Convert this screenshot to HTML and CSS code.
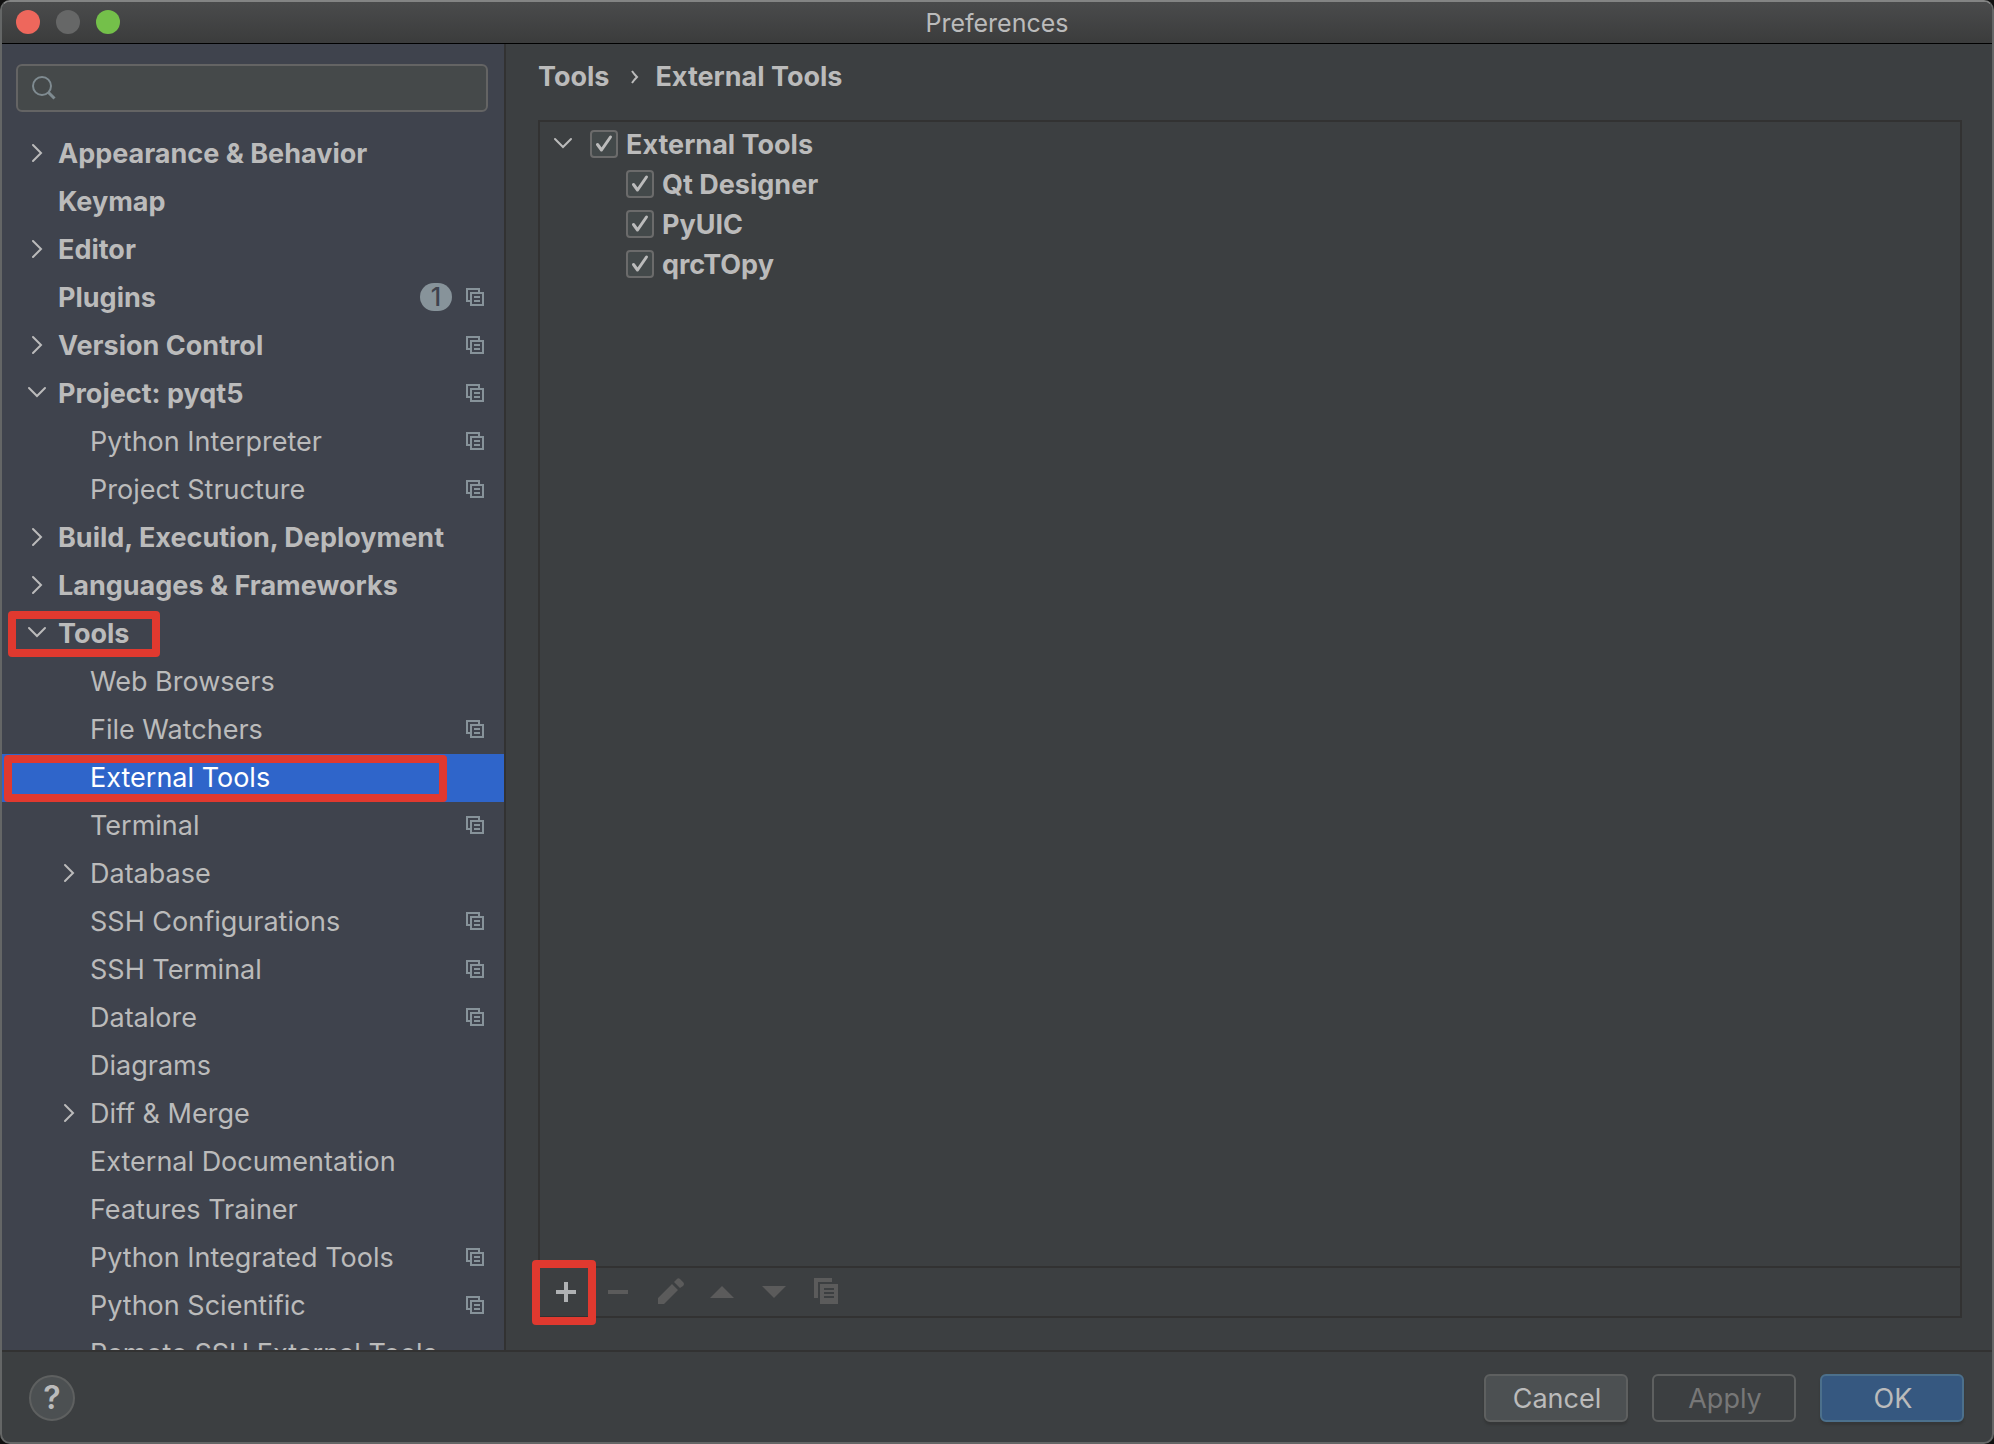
FILE: index.html
```html
<!DOCTYPE html>
<html lang="en">
<head>
<meta charset="utf-8">
<title>Preferences</title>
<link rel="stylesheet" href="styles.css">
</head>
<body>
<svg class="sprite" aria-hidden="true">
  <symbol id="right" viewBox="0 0 20 20"><path d="M6 2l8 8-8 8" fill="none" stroke="currentColor" stroke-width="2" stroke-linecap="round"/></symbol>
  <symbol id="down" viewBox="0 0 20 20"><path d="M2 5l8 8 8-8" fill="none" stroke="currentColor" stroke-width="2" stroke-linecap="round"/></symbol>
  <symbol id="scope" viewBox="0 0 18 18"><path d="M4 13H1V1h12v3M5 5h12v12H5zM8 9h6M8 13h6" fill="none" stroke="currentColor" stroke-width="2"/></symbol>
  <symbol id="check" viewBox="0 0 28 28"><path d="M7.500 14.500l4 5.500 9-13" fill="none" stroke="currentColor" stroke-width="3" stroke-linecap="round" stroke-linejoin="round"/></symbol>
</svg>
<div class="window">
  <header class="titlebar">
    <div class="lights">
      <button class="light close" type="button" aria-label="Close"></button>
      <button class="light minimize" type="button" aria-label="Minimize" disabled></button>
      <button class="light zoom" type="button" aria-label="Zoom"></button>
    </div>
    <h1 class="title">Preferences</h1>
  </header>
  <div class="body">
    <aside class="sidebar">
      <label class="search">
        <svg class="search-icon" viewBox="0 0 24 24" aria-hidden="true"><circle cx="10" cy="10" r="9" fill="none" stroke="currentColor" stroke-width="2"/><path d="M16.500 16.500l6 6" fill="none" stroke="currentColor" stroke-width="3"/></svg>
        <input class="search-input" type="text" aria-label="Search settings">
      </label>
      <nav class="nav" aria-label="Settings">
        <a class="item" href="#"><svg class="chevron"><use href="#right"/></svg><span class="name">Appearance &amp; Behavior</span></a>
        <a class="item" href="#"><span class="chevron"></span><span class="name">Keymap</span></a>
        <a class="item" href="#"><svg class="chevron"><use href="#right"/></svg><span class="name">Editor</span></a>
        <a class="item" href="#"><span class="chevron"></span><span class="name">Plugins</span><span class="badge">1</span><svg class="scope"><use href="#scope"/></svg></a>
        <a class="item" href="#"><svg class="chevron"><use href="#right"/></svg><span class="name">Version Control</span><svg class="scope"><use href="#scope"/></svg></a>
        <a class="item" href="#"><svg class="chevron"><use href="#down"/></svg><span class="name">Project: pyqt5</span><svg class="scope"><use href="#scope"/></svg></a>
        <a class="item child" href="#"><span class="chevron"></span><span class="name">Python Interpreter</span><svg class="scope"><use href="#scope"/></svg></a>
        <a class="item child" href="#"><span class="chevron"></span><span class="name">Project Structure</span><svg class="scope"><use href="#scope"/></svg></a>
        <a class="item" href="#"><svg class="chevron"><use href="#right"/></svg><span class="name">Build, Execution, Deployment</span></a>
        <a class="item" href="#"><svg class="chevron"><use href="#right"/></svg><span class="name">Languages &amp; Frameworks</span></a>
        <a class="item" href="#"><svg class="chevron"><use href="#down"/></svg><span class="name">Tools</span><span class="mark mark-group"></span></a>
        <a class="item child" href="#"><span class="chevron"></span><span class="name">Web Browsers</span></a>
        <a class="item child" href="#"><span class="chevron"></span><span class="name">File Watchers</span><svg class="scope"><use href="#scope"/></svg></a>
        <a class="item child selected" href="#" aria-current="page"><span class="chevron"></span><span class="name">External Tools</span><span class="mark mark-page"></span></a>
        <a class="item child" href="#"><span class="chevron"></span><span class="name">Terminal</span><svg class="scope"><use href="#scope"/></svg></a>
        <a class="item child" href="#"><svg class="chevron"><use href="#right"/></svg><span class="name">Database</span></a>
        <a class="item child" href="#"><span class="chevron"></span><span class="name">SSH Configurations</span><svg class="scope"><use href="#scope"/></svg></a>
        <a class="item child" href="#"><span class="chevron"></span><span class="name">SSH Terminal</span><svg class="scope"><use href="#scope"/></svg></a>
        <a class="item child" href="#"><span class="chevron"></span><span class="name">Datalore</span><svg class="scope"><use href="#scope"/></svg></a>
        <a class="item child" href="#"><span class="chevron"></span><span class="name">Diagrams</span></a>
        <a class="item child" href="#"><svg class="chevron"><use href="#right"/></svg><span class="name">Diff &amp; Merge</span></a>
        <a class="item child" href="#"><span class="chevron"></span><span class="name">External Documentation</span></a>
        <a class="item child" href="#"><span class="chevron"></span><span class="name">Features Trainer</span></a>
        <a class="item child" href="#"><span class="chevron"></span><span class="name">Python Integrated Tools</span><svg class="scope"><use href="#scope"/></svg></a>
        <a class="item child" href="#"><span class="chevron"></span><span class="name">Python Scientific</span><svg class="scope"><use href="#scope"/></svg></a>
        <a class="item child" href="#"><span class="chevron"></span><span class="name">Remote SSH External Tools</span></a>
      </nav>
    </aside>
    <main class="content">
      <h2 class="crumbs"><span>Tools</span><svg class="crumb-arrow" viewBox="0 0 14 14" aria-hidden="true"><path d="M7 1q2 3 5 6-3 3-5 6" fill="none" stroke="currentColor" stroke-width="2"/></svg><span>External Tools</span></h2>
      <section class="panel">
        <div class="tools">
          <div class="tool">
            <svg class="chevron"><use href="#down"/></svg>
            <label class="choice"><span class="tick"><input class="box" type="checkbox" checked><svg class="tick-mark"><use href="#check"/></svg></span><span class="choice-name">External Tools</span></label>
          </div>
          <div class="tool tool-child">
            <label class="choice"><span class="tick"><input class="box" type="checkbox" checked><svg class="tick-mark"><use href="#check"/></svg></span><span class="choice-name">Qt Designer</span></label>
          </div>
          <div class="tool tool-child">
            <label class="choice"><span class="tick"><input class="box" type="checkbox" checked><svg class="tick-mark"><use href="#check"/></svg></span><span class="choice-name">PyUIC</span></label>
          </div>
          <div class="tool tool-child">
            <label class="choice"><span class="tick"><input class="box" type="checkbox" checked><svg class="tick-mark"><use href="#check"/></svg></span><span class="choice-name">qrcTOpy</span></label>
          </div>
        </div>
        <div class="toolbar">
          <button class="action add" type="button" aria-label="Add"><svg class="glyph" viewBox="0 0 28 28"><path d="M12 4h4v8h8v4h-8v8h-4v-8H4v-4h8z" fill="currentColor"/></svg><span class="mark mark-add"></span></button>
          <button class="action" type="button" aria-label="Remove" disabled><svg class="glyph" viewBox="0 0 28 28"><path d="M4 12h20v4H4z" fill="currentColor"/></svg></button>
          <button class="action" type="button" aria-label="Edit" disabled><svg class="glyph" viewBox="0 0 28 28"><path d="M2 20L16 6l6 6L8 26H2zM18 4l2-2q2-3 4-1l3 3q2 2 0 4l-3 2z" fill="currentColor"/></svg></button>
          <button class="action" type="button" aria-label="Move up" disabled><svg class="glyph" viewBox="0 0 28 28"><path d="M14 8l12 12H2z" fill="currentColor"/></svg></button>
          <button class="action" type="button" aria-label="Move down" disabled><svg class="glyph" viewBox="0 0 28 28"><path d="M14 20L2 8h24z" fill="currentColor"/></svg></button>
          <button class="action" type="button" aria-label="Copy" disabled><svg class="glyph" viewBox="0 0 28 28"><path d="M2 0h18v4H6v16H2z" fill="currentColor"/><path fill-rule="evenodd" d="M8 6h18v20H8zM12 10v2h10v-2zM12 14v2h10v-2zM12 18v2h10v-2z" fill="currentColor"/></svg></button>
        </div>
      </section>
    </main>
  </div>
  <footer class="footer">
    <button class="help" type="button" aria-label="Help">?</button>
    <div class="buttons">
      <button class="button" type="button">Cancel</button>
      <button class="button apply" type="button" disabled>Apply</button>
      <button class="button primary" type="button">OK</button>
    </div>
  </footer>
</div>
</body>
</html>
```
FILE: styles.css
```css
* {
  box-sizing: border-box;
}

body {
  margin: 0;
  background: #101010;
  color: #bbbbbb;
  font: 27px/32px Inter, "Liberation Sans", sans-serif;
}

button,
input {
  margin: 0;
  padding: 0;
  color: inherit;
  font: inherit;
}

.sprite {
  display: none;
}

.window {
  display: flex;
  flex-direction: column;
  height: 100vh;
  overflow: hidden;
  border: 2px solid #646666;
  border-top-color: #838484;
  border-radius: 10px;
  background: #3c3f41;
}

.titlebar {
  display: grid;
  grid-template-columns: 1fr auto 1fr;
  align-items: center;
  flex: none;
  height: 42px;
  padding: 0 14px 1px;
  border-bottom: 1px solid #000000;
  background: linear-gradient(#4a4b4c, #3b3c3c);
}

.lights {
  display: flex;
  gap: 16px;
}

.light {
  width: 24px;
  height: 24px;
  border: 0;
  border-radius: 50%;
}

.close {
  background: #ee675c;
}

.minimize {
  background: #666767;
}

.zoom {
  background: #74c04a;
}

.title {
  margin: 0;
  padding-top: 2px;
  font-size: 25px;
  font-weight: 400;
}

.body {
  display: flex;
  flex: 1;
  min-height: 0;
}

.sidebar {
  display: flex;
  flex-direction: column;
  flex: none;
  width: 504px;
  border-right: 2px solid #323232;
  background: #3f434d;
}

.search {
  display: flex;
  align-items: center;
  gap: 8px;
  flex: none;
  height: 48px;
  margin: 20px 16px 18px 14px;
  padding: 0 14px;
  border: 2px solid #646464;
  border-radius: 6px;
  background: #45494a;
}

.search-icon {
  width: 24px;
  height: 24px;
  color: #7f8b91;
}

.search-input {
  flex: 1;
  min-width: 0;
  border: 0;
  outline: 0;
  background: none;
}

.nav {
  flex: 1;
  min-height: 0;
  overflow: hidden;
}

.item {
  position: relative;
  display: flex;
  align-items: center;
  gap: 11px;
  height: 48px;
  padding: 0 20px 2px 25px;
  color: inherit;
  font-weight: 700;
  text-decoration: none;
}

.child {
  padding-left: 57px;
  font-weight: 400;
}

.selected {
  background: #2f65ca;
  color: #ffffff;
}

.chevron {
  flex: none;
  width: 20px;
  height: 20px;
}

.name {
  flex: 1;
  padding-top: 1px;
  white-space: nowrap;
}

.badge {
  width: 32px;
  height: 28px;
  margin-right: 3px;
  border-radius: 14px;
  background: #87939a;
  color: #3f434d;
  font-size: 25px;
  font-weight: 500;
  line-height: 28px;
  text-align: center;
}

.scope {
  flex: none;
  width: 18px;
  height: 18px;
  color: #87939a;
}

.mark {
  position: absolute;
  border: 8px solid #e0392f;
  border-radius: 4px;
  pointer-events: none;
}

.mark-group {
  top: 1px;
  left: 6px;
  width: 152px;
  height: 46px;
}

.mark-page {
  top: 1px;
  left: 2px;
  width: 443px;
  height: 47px;
}

.mark-add {
  top: -8px;
  left: -8px;
  width: 64px;
  height: 65px;
}

.content {
  display: flex;
  flex-direction: column;
  flex: 1;
  min-width: 0;
  padding: 17px 30px 32px 32px;
}

.crumbs {
  display: flex;
  align-items: center;
  gap: 16px;
  flex: none;
  margin: 0 0 27px;
  font-size: 27px;
}

.crumb-arrow {
  width: 14px;
  height: 14px;
}

.panel {
  display: flex;
  flex-direction: column;
  flex: 1;
  min-height: 0;
  border: 2px solid #323232;
}

.tools {
  flex: 1;
  padding: 2px 13px;
}

.tool {
  display: flex;
  align-items: center;
  gap: 17px;
  height: 40px;
  font-weight: 700;
}

.tool-child {
  padding-left: 73px;
}

.choice {
  display: flex;
  align-items: center;
  gap: 8px;
}

.choice-name {
  padding-top: 2px;
}

.tick {
  display: grid;
}

.box,
.tick-mark {
  grid-area: 1 / 1;
  width: 28px;
  height: 28px;
}

.box {
  appearance: none;
  border: 2px solid #6b6b6b;
  border-radius: 4px;
  background: #43494a;
}

.tick-mark {
  pointer-events: none;
}

.toolbar {
  display: flex;
  flex: none;
  height: 50px;
  border-top: 2px solid #323232;
}

.action {
  position: relative;
  display: grid;
  place-items: center;
  width: 52px;
  border: 0;
  background: none;
  color: #5b5b5b;
}

.add {
  color: #afb1b3;
}

.glyph {
  width: 28px;
  height: 28px;
}

.footer {
  display: flex;
  align-items: center;
  justify-content: space-between;
  flex: none;
  height: 92px;
  padding: 2px 28px 0 27px;
  border-top: 2px solid #323232;
}

.help {
  width: 46px;
  height: 46px;
  border: 2px solid #5e6060;
  border-radius: 50%;
  background: #4c5052;
  font-size: 32px;
  font-weight: 600;
}

.buttons {
  display: flex;
  gap: 24px;
}

.button {
  width: 144px;
  height: 48px;
  padding: 2px 0 0 2px;
  border: 2px solid #5e6060;
  border-radius: 6px;
  background: #4c5052;
  box-shadow: 0 3px 2px #353738;
}

.apply {
  background: none;
  box-shadow: none;
  color: #777777;
}

.primary {
  border-color: #4c708c;
  background: #365880;
}
```
